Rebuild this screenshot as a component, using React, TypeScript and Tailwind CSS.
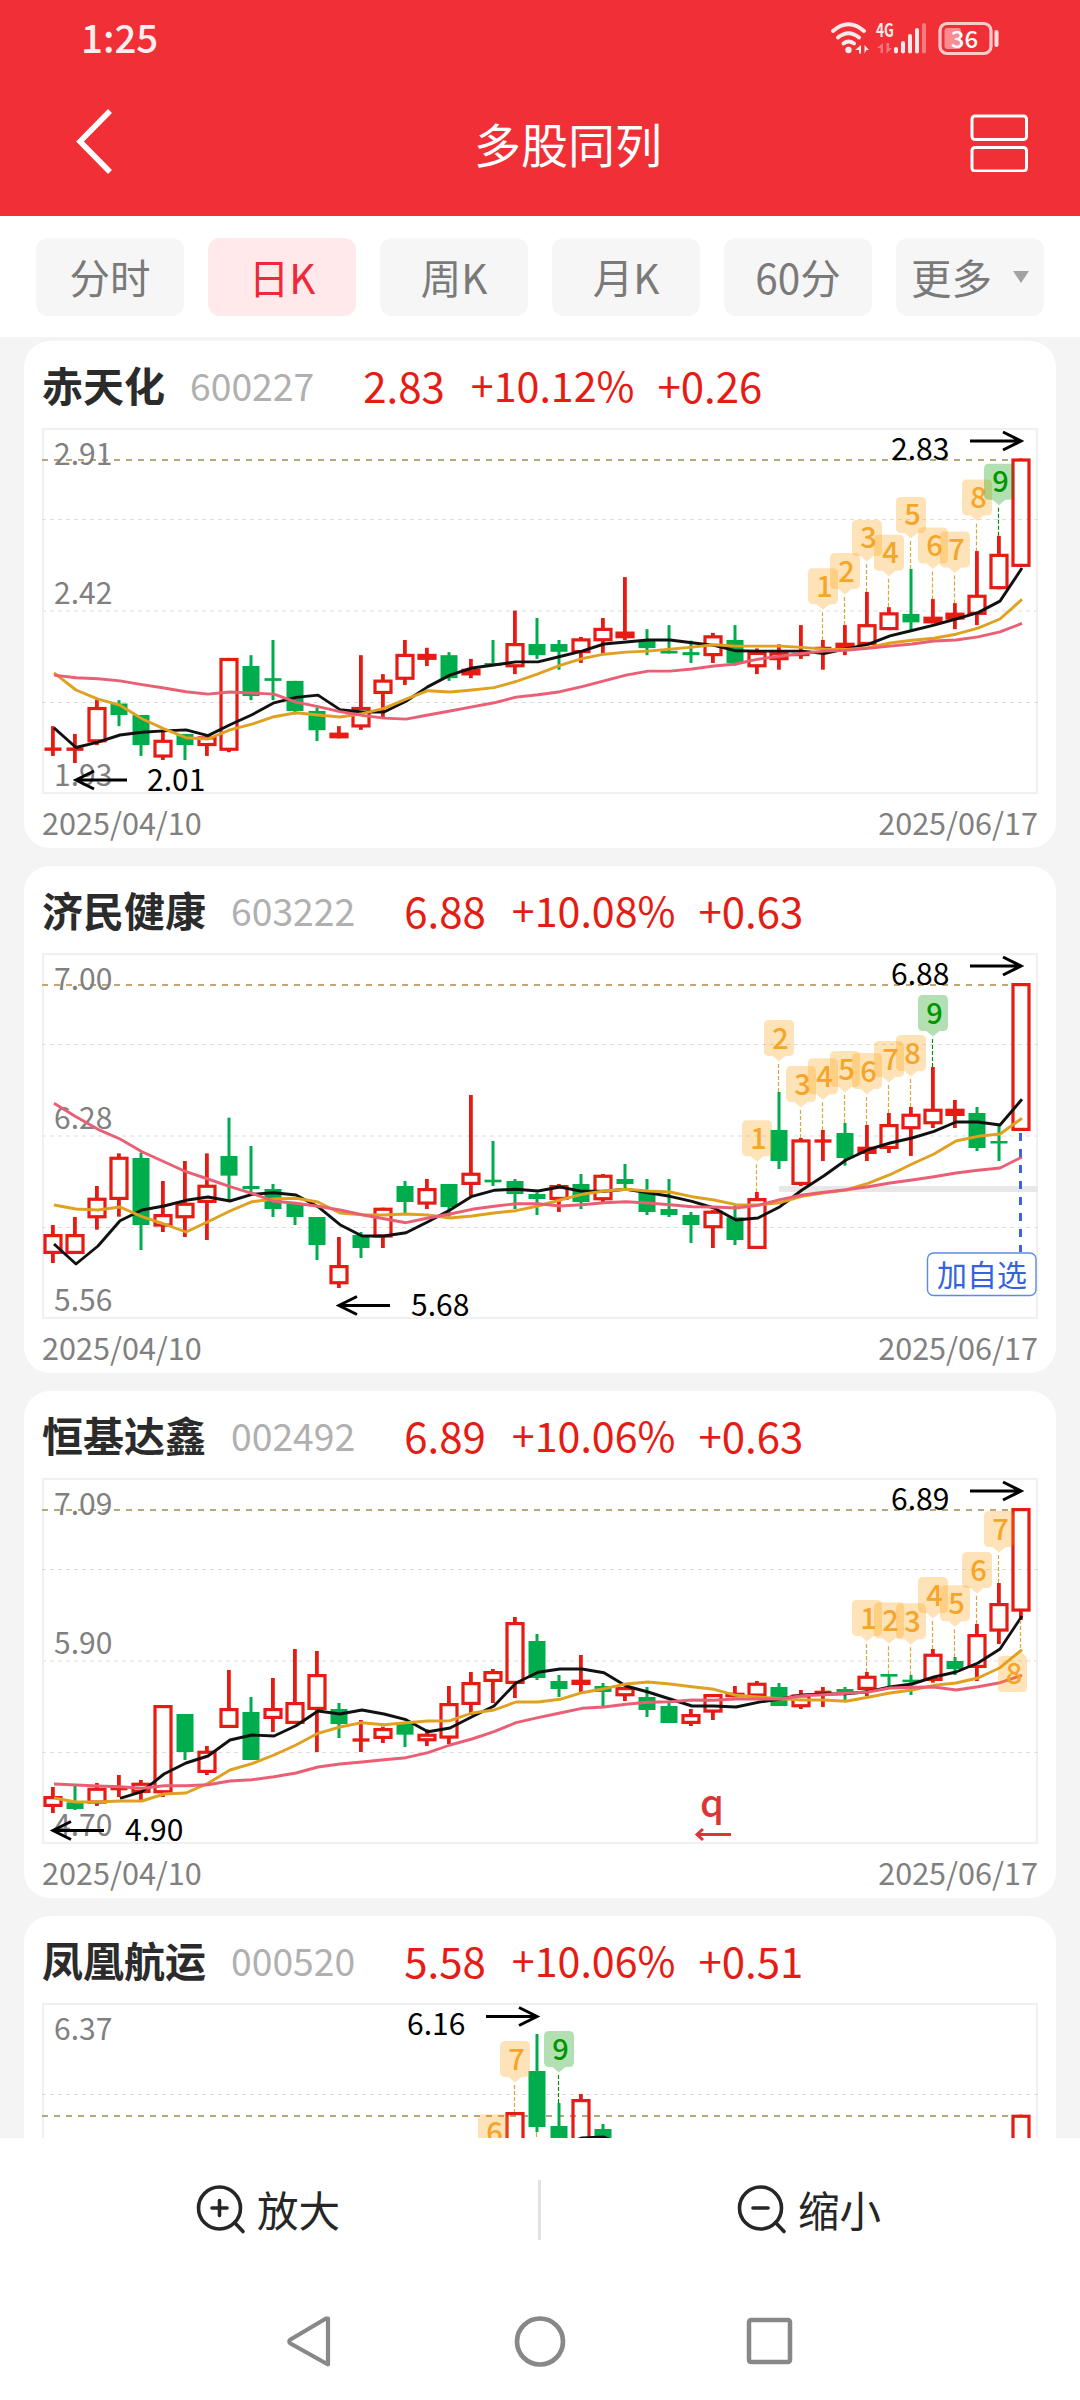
import React from "react";

type Candle = [kind: "r" | "g", high: number, top: number, bottom: number, low: number];

interface Badge {
  i: number;
  y: number;
  n: number;
}

interface Stock {
  name: string;
  code: string;
  price: string;
  pct: string;
  diff: string;
  /** Data offset and data units per pixel on the vertical axis. */
  origin: number;
  unit: number;
  start?: number;
  candles: Candle[];
  black: number[];
  blackStart?: number;
  orange: number[];
  pink: number[];
  badges: Badge[];
  priceLine: number;
  grid: number[];
  axis: [string, number][];
  last?: number;
}

const stocks: Stock[] = [
  {
    name: "赤天化",
    code: "600227",
    price: "2.83",
    pct: "+10.12%",
    diff: "+0.26",
    origin: 290,
    unit: 2.958,
    candles: [
      ["r", 1172, 1235, 1245, 1260], ["r", 1195, 1235, 1245, 1281], ["r", 1093, 1115, 1220, 1228],
      ["g", 1095, 1105, 1139, 1172], ["g", 1139, 1139, 1228, 1260], ["r", 1185, 1212, 1265, 1272],
      ["g", 1195, 1195, 1228, 1272], ["r", 1200, 1202, 1231, 1260], ["r", 970, 970, 1245, 1249],
      ["g", 962, 994, 1083, 1095], ["g", 917, 1030, 1038, 1095], ["g", 1038, 1038, 1127, 1137],
      ["g", 1117, 1127, 1184, 1216], ["r", 1172, 1191, 1208, 1208], ["r", 962, 1115, 1176, 1183],
      ["r", 1018, 1034, 1077, 1145], ["r", 917, 958, 1035, 1050], ["r", 940, 958, 976, 994],
      ["g", 953, 962, 1030, 1038], ["r", 973, 1002, 1022, 1030], ["g", 917, 985, 993, 993],
      ["r", 830, 926, 998, 1018], ["g", 852, 929, 962, 973], ["g", 917, 929, 952, 1005],
      ["r", 908, 912, 956, 985], ["r", 852, 881, 921, 956], ["r", 731, 892, 912, 917],
      ["g", 885, 917, 941, 962], ["g", 873, 949, 957, 957], ["g", 919, 953, 962, 985],
      ["r", 896, 903, 965, 985], ["g", 873, 917, 985, 993], ["r", 942, 952, 998, 1018],
      ["r", 930, 953, 977, 1005], ["r", 873, 955, 965, 973], ["r", 917, 937, 946, 1005],
      ["r", 873, 925, 943, 962], ["r", 775, 870, 932, 932], ["r", 820, 835, 888, 888],
      ["g", 707, 840, 865, 890], ["r", 796, 848, 868, 868], ["r", 808, 836, 857, 885],
      ["r", 654, 783, 843, 873], ["r", 609, 662, 767, 767], ["r", 380, 380, 701, 701],
    ],
    black: [
      1177, 1235, 1219, 1198, 1190, 1186, 1183, 1200, 1168, 1138, 1103, 1087, 1080, 1123, 1130, 1130, 1098, 1055, 1021,
      1000, 991, 982, 982, 966, 950, 929, 923, 917, 917, 925, 933, 949, 950, 950, 950, 957, 943, 930, 905, 889, 873,
      855, 836, 802, 704,
    ],
    orange: [
      1014, 1065, 1092, 1110, 1150, 1180, 1206, 1210, 1183, 1166, 1144, 1132, 1139, 1145, 1135, 1119, 1092, 1067, 1071,
      1065, 1058, 1040, 1017, 992, 972, 959, 953, 950, 944, 938, 931, 935, 935, 935, 939, 944, 945, 940, 926, 918, 912,
      900, 882, 855, 797,
    ],
    pink: [
      1021, 1029, 1032, 1038, 1049, 1059, 1070, 1077, 1071, 1074, 1077, 1101, 1114, 1129, 1140, 1148, 1151, 1139, 1127,
      1115, 1103, 1086, 1079, 1070, 1055, 1038, 1021, 1009, 1009, 1003, 994, 988, 974, 965, 957, 950, 948, 942, 935, 929,
      920, 917, 908, 893, 868,
    ],
    badges: [
      { i: 35, y: 705, n: 1 }, { i: 36, y: 660, n: 2 }, { i: 37, y: 562, n: 3 }, { i: 38, y: 606, n: 4 },
      { i: 39, y: 494, n: 5 }, { i: 40, y: 584, n: 6 }, { i: 41, y: 596, n: 7 }, { i: 42, y: 442, n: 8 },
      { i: 43, y: 396, n: 9 },
    ],
    priceLine: 32,
    grid: [91.5, 183, 274.5],
    axis: [["2.91", 36.5], ["2.42", 175.5], ["1.93", 358]],
  },
  {
    name: "济民健康",
    code: "603222",
    price: "6.88",
    pct: "+10.08%",
    diff: "+0.63",
    origin: 279,
    unit: 3,
    candles: [
      ["r", 1095, 1122, 1182, 1209], ["r", 1071, 1122, 1182, 1182], ["r", 978, 1013, 1075, 1109],
      ["r", 880, 890, 1020, 1070], ["g", 878, 894, 1095, 1170], ["r", 963, 1062, 1100, 1116],
      ["r", 903, 1028, 1075, 1131], ["r", 880, 974, 1029, 1140], ["g", 773, 888, 947, 1020],
      ["g", 858, 978, 987, 1000], ["g", 972, 987, 1047, 1071], ["g", 1030, 1030, 1071, 1095],
      ["g", 1071, 1071, 1155, 1200], ["r", 1131, 1215, 1273, 1284], ["g", 1116, 1125, 1164, 1194],
      ["r", 1043, 1043, 1133, 1164], ["g", 963, 978, 1026, 1060], ["r", 957, 984, 1034, 1047],
      ["g", 972, 972, 1041, 1070], ["r", 705, 938, 975, 1008], ["g", 843, 959, 967, 978],
      ["g", 957, 963, 1002, 1047], ["g", 998, 1002, 1017, 1065], ["r", 972, 975, 1020, 1056],
      ["g", 942, 972, 1026, 1047], ["r", 942, 944, 1021, 1026], ["g", 912, 957, 972, 990],
      ["g", 957, 990, 1056, 1065], ["g", 957, 1047, 1065, 1071], ["g", 1056, 1065, 1095, 1149],
      ["r", 1050, 1052, 1105, 1164], ["g", 1035, 1072, 1140, 1155], ["r", 996, 1014, 1167, 1167],
      ["g", 696, 810, 903, 927], ["r", 834, 838, 975, 978], ["r", 810, 838, 848, 903],
      ["g", 789, 819, 894, 917], ["r", 795, 860, 882, 903], ["r", 759, 792, 867, 879],
      ["r", 741, 761, 808, 888], ["r", 621, 746, 793, 804], ["r", 720, 746, 768, 804],
      ["g", 741, 759, 864, 873], ["g", 795, 843, 850, 903], ["r", 369, 369, 813, 813],
    ],
    black: [
      1152, 1212, 1158, 1082, 1050, 1038, 1021, 1011, 1023, 1003, 998, 1005, 1040, 1094, 1128, 1128, 1118, 1085, 1050,
      1009, 991, 988, 993, 981, 994, 994, 988, 998, 1009, 1024, 1044, 1080, 1074, 1040, 990, 947, 900, 869, 849, 834,
      814, 786, 786, 795, 718,
    ],
    orange: [
      1035, 1047, 1050, 1041, 1070, 1092, 1116, 1085, 1053, 1025, 1017, 1015, 1026, 1059, 1064, 1065, 1062, 1065, 1074,
      1068, 1059, 1052, 1038, 1020, 1003, 993, 988, 993, 996, 1010, 1020, 1034, 1035, 1028, 1009, 998, 990, 970, 944,
      912, 882, 843, 829, 822, 775,
    ],
    pink: [
      730, 770, 808, 837, 875, 905, 935, 957, 980, 1000, 1024, 1030, 1039, 1050, 1064, 1076, 1088, 1074, 1062, 1048,
      1039, 1031, 1031, 1038, 1034, 1028, 1025, 1029, 1034, 1040, 1041, 1044, 1036, 1019, 1005, 997, 989, 980, 969, 960,
      950, 939, 931, 924, 891,
    ],
    badges: [
      { i: 32, y: 781, n: 1 }, { i: 33, y: 480, n: 2 }, { i: 34, y: 618, n: 3 }, { i: 35, y: 595, n: 4 },
      { i: 36, y: 573, n: 5 }, { i: 37, y: 579, n: 6 }, { i: 38, y: 543, n: 7 }, { i: 39, y: 525, n: 8 },
      { i: 40, y: 405, n: 9 },
    ],
    priceLine: 32,
    grid: [91.5, 183, 274.5],
    axis: [["7.00", 36.5], ["6.28", 175.5], ["5.56", 358]],
  },
  {
    name: "恒基达鑫",
    code: "002492",
    price: "6.89",
    pct: "+10.06%",
    diff: "+0.63",
    origin: 294,
    unit: 3,
    candles: [
      ["r", 1221, 1248, 1281, 1299], ["g", 1218, 1267, 1287, 1290], ["r", 1209, 1223, 1271, 1278],
      ["r", 1185, 1221, 1231, 1251], ["r", 1200, 1208, 1239, 1260], ["r", 975, 975, 1240, 1251],
      ["g", 1002, 1002, 1116, 1140], ["r", 1098, 1112, 1179, 1185], ["r", 870, 984, 1044, 1044],
      ["g", 951, 996, 1140, 1140], ["r", 894, 984, 1017, 1056], ["r", 807, 966, 1032, 1032],
      ["r", 813, 882, 990, 1116], ["g", 969, 987, 1032, 1074], ["r", 1020, 1075, 1085, 1116],
      ["r", 1040, 1044, 1077, 1089], ["g", 1032, 1032, 1064, 1101], ["r", 1048, 1061, 1084, 1098],
      ["r", 918, 969, 1076, 1092], ["r", 876, 906, 975, 1005], ["r", 867, 873, 906, 969],
      ["r", 711, 726, 912, 954], ["g", 762, 783, 894, 900], ["g", 885, 903, 927, 951],
      ["r", 825, 899, 915, 936], ["g", 909, 918, 936, 978], ["r", 920, 921, 949, 963],
      ["g", 921, 951, 990, 1011], ["g", 969, 978, 1029, 1029], ["r", 987, 1002, 1032, 1038],
      ["r", 942, 942, 998, 1020], ["r", 918, 938, 952, 952], ["r", 903, 908, 950, 950],
      ["g", 909, 921, 978, 978], ["r", 930, 943, 982, 987], ["r", 921, 932, 942, 981],
      ["g", 921, 927, 936, 960], ["r", 876, 887, 930, 948], ["g", 882, 882, 890, 918],
      ["g", 885, 899, 906, 945], ["r", 807, 821, 903, 908], ["g", 831, 843, 867, 885],
      ["r", 732, 762, 864, 903], ["r", 609, 669, 755, 792], ["r", 384, 384, 695, 720],
    ],
    blackStart: 3,
    black: [
      1255, 1235, 1182, 1149, 1128, 1080, 1065, 1068, 1037, 993, 1002, 990, 1002, 1019, 1055, 1044, 1010, 978, 909, 877,
      867, 867, 878, 918, 936, 957, 978, 978, 981, 967, 957, 945, 942, 941, 935, 921, 912, 891, 876, 849, 807, 708,
    ],
    orange: [
      1254, 1266, 1266, 1263, 1263, 1242, 1239, 1210, 1170, 1151, 1125, 1095, 1060, 1041, 1028, 1034, 1028, 1023, 1022,
      999, 990, 966, 966, 958, 938, 926, 912, 906, 912, 920, 928, 946, 951, 956, 960, 960, 964, 952, 939, 930, 916, 909,
      894, 863, 809,
    ],
    pink: [
      1212, 1215, 1218, 1220, 1225, 1217, 1217, 1214, 1203, 1199, 1190, 1179, 1161, 1152, 1146, 1139, 1133, 1118, 1095,
      1077, 1055, 1028, 1013, 999, 985, 981, 973, 967, 965, 960, 961, 957, 957, 957, 947, 944, 940, 936, 924, 922, 921,
      930, 920, 908, 886,
    ],
    badges: [
      { i: 37, y: 660, n: 1 }, { i: 38, y: 667, n: 2 }, { i: 39, y: 670, n: 3 }, { i: 40, y: 591, n: 4 },
      { i: 41, y: 616, n: 5 }, { i: 42, y: 516, n: 6 }, { i: 43, y: 393, n: 7 },
    ],
    priceLine: 32,
    grid: [91.5, 183, 274.5],
    axis: [["7.09", 36.5], ["5.90", 175.5], ["4.70", 358]],
  },
  {
    name: "凤凰航运",
    code: "000520",
    price: "5.58",
    pct: "+10.06%",
    diff: "+0.51",
    origin: 309,
    unit: 3,
    start: 21,
    candles: [
      ["r", 636, 636, 860, 860], ["g", 402, 513, 681, 696], ["g", 609, 678, 860, 860],
      ["r", 582, 597, 860, 860], ["g", 672, 687, 860, 860],
    ],
    last: 644,
    blackStart: 23,
    black: [735, 714, 711, 740],
    orange: [],
    pink: [],
    badges: [{ i: 20, y: 643, n: 6 }, { i: 21, y: 423, n: 7 }, { i: 23, y: 393, n: 9 }],
    priceLine: 113,
    grid: [91.5],
    axis: [["6.37", 36.5]],
  },
];

const cx = (i: number) => 11 + 22 * i;

const FONT = "font-['Noto_Sans_CJK_SC',sans-serif]";

function BadgeMark({ x, y, n, to }: { x: number; y: number; n: number; to: number }) {
  const green = n === 9;
  return (
    <g>
      <path
        d={`M${x - 10} ${y}h20q5 0 5 5v26q0 5 -5 5h-3.500l-6.500 5.500l-6.500 -5.500h-3.500q-5 0 -5 -5v-26q0 -5 5 -5z`}
        fill={green ? "#009900" : "#ff9900"}
        fillOpacity={green ? 0.3 : 0.28}
      />
      <path d={`M${x - 0.5} ${y + 44}V${to}`} stroke={green ? "#0a8a0a" : "#d6a93c"} strokeWidth="1.2" strokeDasharray="4 2" />
      <text
        x={x + 1.5}
        y={y + 28.5}
        fontSize="29"
        fontWeight="500"
        textAnchor="middle"
        fill={green ? "#009600" : "#f5a52a"}
      >
        {n}
      </text>
    </g>
  );
}

function Arrow({ x, y, dir }: { x: number; y: number; dir: 1 | -1 }) {
  return (
    <path
      d={`M${x - 51 * dir} ${y}H${x}M${x - 18 * dir} ${y - 9}L${x} ${y}L${x - 18 * dir} ${y + 9}`}
      stroke="#000"
      strokeWidth="3"
      fill="none"
    />
  );
}

function Chart({ s, index }: { s: Stock; index: number }) {
  const y = (v: number) => (v - s.origin) / s.unit;
  const start = s.start ?? 0;
  const line = (vals: number[], from = 0) => vals.map((v, i) => `${cx(i + from) + 1},${y(v).toFixed(1)}`).join(" ");
  const candles: [number, Candle][] = s.candles.map((c, i) => [i + start, c]);
  if (s.last) candles.push([44, ["r", s.last, s.last, 860, 860]]);
  const highOf = (i: number) => {
    const found = candles.find(([k]) => k === i);
    return found ? y(found[1][1]) : 366;
  };
  return (
    <svg width="996" height="366" viewBox="0 0 996 366" className={`block overflow-visible ${FONT}`}>
      <rect x="1" y="1" width="994" height="364" fill="none" stroke="#f0f0f0" strokeWidth="2" />
      {s.grid.map((g, i) => (
        <path
          key={g}
          d={`M0 ${g}H996`}
          stroke={i === 1 ? "#eeeeee" : "#dedede"}
          strokeWidth={i === 1 ? 2 : 1}
          strokeDasharray="4 4"
        />
      ))}
      {index === 1 && <rect x="737" y="233" width="259" height="6" fill="#e8e8e8" />}
      <path d={`M0 ${s.priceLine}H984`} stroke={index === 1 ? "#c6a477" : "#b9a77c"} strokeWidth="2" strokeDasharray="6 6" />
      {s.axis.map(([t, base]) => (
        <text key={t} x="12" y={base} fontSize="30" fill="#808080">
          {t}
        </text>
      ))}
      {candles.map(([i, [kind, h, t, b, l]]) => {
        const x = cx(i);
        const top = y(t);
        const bottom = y(b);
        if (kind === "g")
          return (
            <g key={i} fill="#00ad4c">
              <rect x={x - 1.5} y={y(h)} width="3" height={y(l) - y(h)} />
              <rect x={x - 8.5} y={top} width="17" height={Math.max(2.5, bottom - top)} />
            </g>
          );
        const hollow = bottom - top > 7.4;
        return (
          <g key={i} fill="#e61c14">
            <rect x={x - 2} y={y(h)} width="3.8" height={Math.max(0, top - y(h) + 1)} />
            <rect x={x - 2} y={bottom - 1} width="3.8" height={Math.max(0, y(l) - bottom + 1)} />
            {hollow ? (
              <rect
                x={x - 8}
                y={top + 1.6}
                width="16"
                height={bottom - top - 3.2}
                fill="none"
                stroke="#e61c14"
                strokeWidth="3.2"
              />
            ) : (
              <rect
                x={bottom - top < 4 ? x - 8.5 : x - 9.6}
                y={top}
                width={bottom - top < 4 ? 17 : 19.2}
                height={bottom - top}
              />
            )}
          </g>
        );
      })}
      <g fill="none" strokeWidth="2.9" strokeLinejoin="round">
        <polyline points={line(s.black, s.blackStart)} stroke="#111111" />
        <polyline points={line(s.orange)} stroke="#e0a020" />
        <polyline points={line(s.pink)} stroke="#ea5f74" />
      </g>
      {s.badges.map((b) => (
        <BadgeMark key={b.n} x={cx(b.i)} y={y(b.y)} n={b.n} to={highOf(b.i)} />
      ))}
      {index < 3 && (
        <>
          <Arrow x={979} y={13} dir={1} />
          <text x="849" y="32" fontSize="30" fill="#000">
            {s.price}
          </text>
        </>
      )}
      {index === 0 && (
        <>
          <Arrow x={34} y={352} dir={-1} />
          <text x="105" y="362.5" fontSize="30" fill="#000">2.01</text>
        </>
      )}
      {index === 1 && (
        <>
          <Arrow x={297} y={352.5} dir={-1} />
          <text x="369" y="363" fontSize="30" fill="#000">5.68</text>
          <path d="M978.5 180V299" stroke="#3b68d6" strokeWidth="3" strokeDasharray="8 8" />
          <rect x="885.500" y="300" width="108.5" height="42.500" rx="6" fill="#fff" stroke="#5b8aea" strokeWidth="1.4" />
          <text x="940" y="332.500" fontSize="30" textAnchor="middle" fill="#3562e0">加自选</text>
        </>
      )}
      {index === 2 && (
        <>
          <Arrow x={11} y={352.5} dir={-1} />
          <text x="83" y="363" fontSize="30" fill="#000">4.90</text>
          <text x="670" y="338.5" fontSize="38" fontWeight="500" textAnchor="middle" fill="#da3636">q</text>
          <path d="M689 356.5H655M661 351L655 356.5L661 362" fill="none" stroke="#da3636" strokeWidth="3" />
          <path d="M978.5 142V173" stroke="#d6a93c" strokeWidth="1.2" strokeDasharray="4 2" />
          <path
            d="M961 178h11l6.5 -5l5 5q1.500 1 1.500 4v28q0 4 -4 4h-21q-4 0 -4 -4v-28q0 -4 4 -4z"
            fill="#ff9900"
            fillOpacity="0.28"
          />
          <text x="972" y="206" fontSize="29" fontWeight="500" textAnchor="middle" fill="#f5a52a">8</text>
        </>
      )}
      {index === 3 && (
        <>
          <Arrow x={495} y={13.5} dir={1} />
          <text x="365" y="32" fontSize="30" fill="#000">6.16</text>
          <path d="M494.500 129V134" stroke="#d6a93c" strokeWidth="1.2" />
        </>
      )}
    </svg>
  );
}

function StockCard({ s, index }: { s: Stock; index: number }) {
  return (
    <section className="h-[507px] shrink-0 rounded-[26px] bg-white px-[18px]">
      <header className="flex h-[87px] items-center whitespace-nowrap">
        <h2 className="text-[41px] leading-none font-bold text-[#2b2b2b]">{s.name}</h2>
        <span className="ml-[25px] pt-0.5 text-[37.300px] leading-none text-[#b0b0b0]">{s.code}</span>
        <span className="ml-[49px] text-[42px] leading-none text-[#e61c14]">{s.price}</span>
        <span className="ml-[26px] text-[41.200px] leading-none text-[#e61c14]">{s.pct}</span>
        <span className="ml-[23px] text-[42px] leading-none text-[#e61c14]">{s.diff}</span>
      </header>
      <Chart s={s} index={index} />
      <footer className="flex h-[54px] items-center justify-between pt-0.5 text-[30.600px] leading-none text-[#808080]">
        <span>2025/04/10</span>
        <span>2025/06/17</span>
      </footer>
    </section>
  );
}

function StatusIcons() {
  return (
    <svg width="172" height="40" viewBox="828 16 172 40" fill="none" className={`overflow-visible ${FONT}`}>
      <g stroke="#ffe9ea" strokeWidth="4" strokeLinecap="round">
        <path d="M833 29Q848.500 15.500 864 29" />
        <path d="M838 35.500Q848.500 27 859 35.500" />
        <path d="M843.500 41.500Q848.500 37.500 854 41.500" />
      </g>
      <circle cx="848.500" cy="48" r="3.200" fill="#ffe9ea" />
      <path d="M861 43v8.500h-2v-3.500h-4zM864.500 51.500v-8.500l4.500 5h-2.500z" fill="#ffe9ea" />
      <text x="876" y="34.500" fontSize="18.500" fontWeight="700" fill="#ffe9ea" textLength="18" lengthAdjust="spacingAndGlyphs">4G</text>
      <path d="M883 41v10h-2.500v-5h-3.500zM886.500 41h2.500v5h3l-5.500 5.500z" fill="#f8767b" />
      <g fill="#ffe9ea">
        <rect x="894" y="45" width="4" height="6.500" rx="2" />
        <rect x="901" y="39" width="4" height="12.500" rx="2" />
        <rect x="908" y="32" width="4" height="19.500" rx="2" />
        <rect x="915" y="26" width="4" height="25.500" rx="2" />
        <rect x="922" y="21" width="4" height="30.500" rx="2" fill="#f77a7f" />
      </g>
      <rect x="940" y="21.500" width="51" height="30" rx="7" stroke="#ffc9cb" strokeWidth="3.200" />
      <rect x="944.500" y="26" width="16.500" height="21" rx="3" fill="#f98d91" />
      <rect x="994.500" y="28" width="4" height="17" rx="2" fill="#ffdcdd" />
      <text x="964.500" y="45.500" fontSize="24" fontWeight="500" textAnchor="middle" fill="#fff">36</text>
    </svg>
  );
}

function ZoomIcon({ plus }: { plus: boolean }) {
  return (
    <svg width="50" height="50" viewBox="0 0 50 50" fill="none" stroke="#262626" strokeWidth="3.600" strokeLinecap="round">
      <circle cx="23.500" cy="23" r="21" />
      <path d="M16 23h15" />
      {plus && <path d="M23.500 15.500v15" />}
      <path d="M38.500 37.500l8.500 9" />
    </svg>
  );
}

const tabs = ["分时", "日K", "周K", "月K", "60分"];

export default function App() {
  return (
    <div className={`flex h-[2400px] w-[1080px] flex-col overflow-hidden bg-[#f4f4f4] ${FONT}`}>
      <div className="flex h-[216px] shrink-0 flex-col bg-[#f12f37] text-white">
        <div className="flex h-[76px] items-center justify-between pr-20 pl-[81px]">
          <span className="-mt-1 text-[38.500px] leading-none font-medium text-[#ffeeee]">1:25</span>
          <StatusIcons />
        </div>
        <div className="flex h-[132px] items-center justify-between pr-[51px] pl-[75px]">
          <svg width="38" height="68" viewBox="0 0 38 68" fill="none" stroke="#fff" strokeWidth="5.500">
            <path d="M35 3L5 33.500L35 64" />
          </svg>
          <h1 className="ml-[54px] text-[47px] leading-none">多股同列</h1>
          <svg width="60" height="60" viewBox="0 0 60 60" fill="none" stroke="#fff" strokeWidth="3">
            <rect x="3" y="4" width="54.500" height="23.500" rx="3" />
            <rect x="3" y="35.500" width="54.500" height="23.500" rx="3" />
          </svg>
        </div>
      </div>

      <nav className="flex h-[121px] shrink-0 gap-6 bg-white px-9 pt-[22px] text-[40.500px] leading-none">
        {tabs.map((t, i) => (
          <div
            key={t}
            className={
              i === 1
                ? "flex h-[78px] w-[148px] items-center justify-center rounded-[12px] bg-[#ffe9ea] text-[#f0283a]"
                : "flex h-[78px] w-[148px] items-center justify-center rounded-[12px] bg-[#f6f6f6] text-[#7a7a7a]"
            }
          >
            {t}
          </div>
        ))}
        <div className="flex h-[78px] w-[148px] items-center gap-[21px] rounded-[12px] bg-[#f6f6f6] pl-[15px] text-[#7a7a7a]">
          更多
          <svg width="16" height="12" viewBox="0 0 16 12">
            <path d="M0 0h16l-8 12z" fill="#a3a3a3" />
          </svg>
        </div>
      </nav>

      <main className="flex h-[1801px] shrink-0 flex-col gap-[18px] overflow-hidden px-6 pt-1">
        {stocks.map((s, i) => (
          <StockCard key={s.code} s={s} index={i} />
        ))}
      </main>

      <div className="flex h-[144px] shrink-0 items-center bg-white text-[41.500px] leading-none text-[#262626]">
        <div className="flex w-[538px] items-center gap-[11px] pl-[196px]">
          <ZoomIcon plus />
          <span>放大</span>
        </div>
        <div className="h-[60px] w-[3px] bg-[#e2e2e2]" />
        <div className="flex flex-1 items-center gap-[11px] pl-[196px]">
          <ZoomIcon plus={false} />
          <span>缩小</span>
        </div>
      </div>

      <div className="flex h-[118px] shrink-0 items-center justify-between bg-white pr-[286px] pl-[286px]">
        <svg width="48" height="54" viewBox="0 0 48 54" fill="none" stroke="#888" strokeWidth="4.200" strokeLinejoin="round">
          <path d="M42 4.500V50.500L4.500 29.500Q2 27.500 4.500 25.500L40 4.500Z" />
        </svg>
        <svg width="52" height="52" viewBox="0 0 52 52" fill="none" stroke="#888" strokeWidth="4.700">
          <circle cx="26" cy="26.500" r="23" />
        </svg>
        <svg width="48" height="48" viewBox="0 0 48 48" fill="none" stroke="#888" strokeWidth="4.500">
          <rect x="3" y="3" width="41" height="42" rx="2" />
        </svg>
      </div>
    </div>
  );
}
